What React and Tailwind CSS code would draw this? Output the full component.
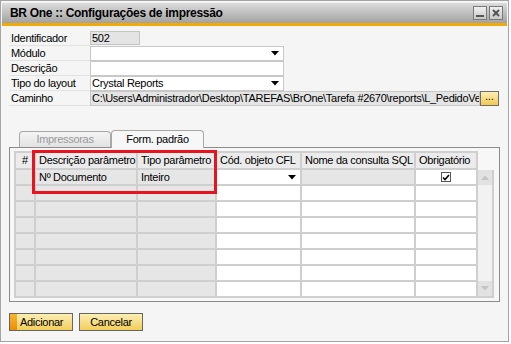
import React from "react";

const font = { fontFamily: '"Liberation Sans", Arial, sans-serif' };

function Arrow({ color = "#000" }) {
  return (
    <svg width="8" height="5" viewBox="0 0 8 5">
      <path d="M0 0 H8 L4 4.5 Z" fill={color} />
    </svg>
  );
}

function Row({ label, children }) {
  return (
    <div className="flex h-[15px]">
      <div className="w-[81px] h-[15px] border-b border-[#e2e2e2] pl-[2px] leading-[14px] text-[11px] text-black">
        {label}
      </div>
      {children}
    </div>
  );
}

const cols = [20, 102, 79, 85, 114, 62];
const headers = ["#", "Descrição parâmetro", "Tipo parâmetro", "Cód. objeto CFL", "Nome da consulta SQL", "Obrigatório"];

function GridRow({ idx }) {
  const first = idx === 0;
  return (
    <div className="flex h-[16px]">
      {cols.map((w, c) => {
        const gray = c <= 2 || (first && c === 4);
        return (
          <div
            key={c}
            style={{ width: w }}
            className={`h-[16px] border-r-2 border-b-2 border-[#cfcfcf] ${gray ? "bg-[#e6e6e6]" : "bg-white"} flex items-center text-[11px] text-black px-[3px] relative`}
          >
            {first && c === 1 && <span className="leading-[14px]">Nº Documento</span>}
            {first && c === 2 && <span className="leading-[14px]">Inteiro</span>}
            {first && c === 3 && (
              <span className="absolute right-[4px] top-[5px]">
                <Arrow />
              </span>
            )}
            {first && c === 5 && (
              <span className="mx-auto w-[10px] h-[10px] border border-[#555] bg-white flex items-center justify-center">
                <svg width="8" height="7" viewBox="0 0 8 7">
                  <path d="M1 3.5 L3 5.5 L7 1" stroke="#000" strokeWidth="1.6" fill="none" />
                </svg>
              </span>
            )}
          </div>
        );
      })}
    </div>
  );
}

export default function App() {
  return (
    <div style={font} className="w-[511px] h-[344px] bg-white tracking-[-0.3px]">
      <div className="w-[509px] h-[342px] border border-[#a4a4a4] bg-[#f5f5f5] flex flex-col p-[1px]">
        {/* Title bar */}
        <div className="h-[20px] mt-[1px] bg-gradient-to-b from-[#dcdcdc] to-[#a2a2a2] flex items-center justify-between pl-[8px] pr-[4px]">
          <span className="text-[12px] font-bold text-black leading-none">BR One :: Configurações de impressão</span>
          <div className="flex gap-[2px]">
            <div className="w-[14px] h-[14px] border border-[#7a7a7a] bg-gradient-to-b from-[#f0f0f0] to-[#c8c8c8] flex items-end justify-center pb-[2px]">
              <div className="w-[8px] h-[2px] bg-[#555]" />
            </div>
            <div className="w-[14px] h-[14px] border border-[#7a7a7a] bg-gradient-to-b from-[#f0f0f0] to-[#c8c8c8] flex items-center justify-center">
              <svg width="8" height="8" viewBox="0 0 8 8">
                <path d="M1 1 L7 7 M7 1 L1 7" stroke="#555" strokeWidth="2" />
              </svg>
            </div>
          </div>
        </div>
        <div className="h-[3px] bg-[#f0ab00]" />

        {/* Form */}
        <div className="flex flex-col pl-[7px] pt-[5px]">
          <Row label="Identificador">
            <div className="w-[50px] h-[14px] border border-[#c4c4c4] bg-[#e4e4e4] text-[11px] leading-[12px] pl-[1px]">502</div>
          </Row>
          <Row label="Módulo">
            <div className="w-[194px] h-[15px] border border-[#c8c8c8] bg-white flex items-center justify-end pr-[4px]">
              <Arrow />
            </div>
          </Row>
          <Row label="Descrição">
            <div className="w-[194px] h-[15px] border border-[#c8c8c8] bg-white" />
          </Row>
          <Row label="Tipo do layout">
            <div className="w-[194px] h-[15px] border border-[#c8c8c8] bg-white flex items-center justify-between pl-[1px] pr-[4px] text-[11px]">
              <span className="leading-[13px]">Crystal Reports</span>
              <Arrow />
            </div>
          </Row>
          <Row label="Caminho">
            <div className="w-[390px] h-[15px] border border-[#c8c8c8] bg-[#e4e4e4] overflow-hidden whitespace-nowrap text-[11px] leading-[13px] pl-[1px]">
              C:\Users\Administrador\Desktop\TAREFAS\BrOne\Tarefa #2670\reports\L_PedidoVen
            </div>
            <div className="w-[19px] h-[15px] border border-[#6e6e6e] bg-gradient-to-b from-[#fcefb4] to-[#f2c94c] text-[10px] leading-[9px] text-center tracking-normal">...</div>
          </Row>
        </div>

        {/* Tabs */}
        <div className="flex items-end pl-[17px] mt-[23px] h-[18px]">
          <div className="w-[92px] h-[16px] border border-b-0 border-[#a8a8a8] rounded-t-[4px] bg-gradient-to-b from-[#f4f4f4] to-[#e2e2e2] text-[11px] text-[#9a9a9a] text-center leading-[15px]">
            Impressoras
          </div>
          <div className="w-[93px] h-[18px] border border-b-0 border-[#a8a8a8] rounded-t-[4px] bg-[#f7f7f7] text-[11px] text-black text-center leading-[17px] relative top-[1px]">
            Form. padrão
          </div>
        </div>

        {/* Panel */}
        <div className="ml-[7px] w-[491px] h-[155px] border border-[#8c8c8c] bg-[#f7f7f7] pl-[4px] pt-[3px]">
          <div className="flex">
            <div className="relative border-l-2 border-t-2 border-[#cfcfcf]">
              {/* header */}
              <div className="flex h-[17px]">
                {headers.map((h, i) => (
                  <div
                    key={i}
                    style={{ width: cols[i] }}
                    className={`h-[17px] border-r-2 border-b-2 border-[#cfcfcf] bg-[#ebebeb] text-[11px] text-black leading-[14px] ${i === 0 ? "text-center" : "pl-[3px]"} whitespace-nowrap overflow-hidden`}
                  >
                    {h}
                  </div>
                ))}
              </div>
              {Array.from({ length: 8 }).map((_, i) => (
                <GridRow key={i} idx={i} />
              ))}
              <div className="absolute left-[16px] top-[-3px] w-[185px] h-[44px] border-[3px] border-[#e8131d]" />
            </div>
            {/* scrollbar */}
            <div className="mt-[19px] w-[16px] h-[128px] border-r-2 border-b-2 border-[#cfcfcf] bg-[#f2f2f2] flex flex-col justify-between">
              <div className="w-[14px] h-[15px] bg-[#e2e2e2] flex items-center justify-center">
                <svg width="8" height="5" viewBox="0 0 8 5">
                  <path d="M0 5 H8 L4 0.5 Z" fill="#c4c4c4" />
                </svg>
              </div>
              <div className="w-[14px] h-[15px] bg-[#e2e2e2] flex items-center justify-center">
                <Arrow color="#c4c4c4" />
              </div>
            </div>
          </div>
        </div>

        {/* Buttons */}
        <div className="flex gap-[6px] pl-[7px] mt-[11px]">
          <div className="w-[64px] h-[18px] border border-[#666] bg-gradient-to-b from-[#fcefb4] to-[#f2cd55] flex text-[11px]">
            <div className="w-[7px] h-full bg-gradient-to-b from-[#f7b52c] to-[#ef8c00]" />
            <span className="pl-[3px] leading-[16px]">Adicionar</span>
          </div>
          <div className="w-[64px] h-[18px] border border-[#666] bg-gradient-to-b from-[#fcefb4] to-[#f2cd55] text-[11px] text-center leading-[16px]">
            Cancelar
          </div>
        </div>
      </div>
    </div>
  );
}
